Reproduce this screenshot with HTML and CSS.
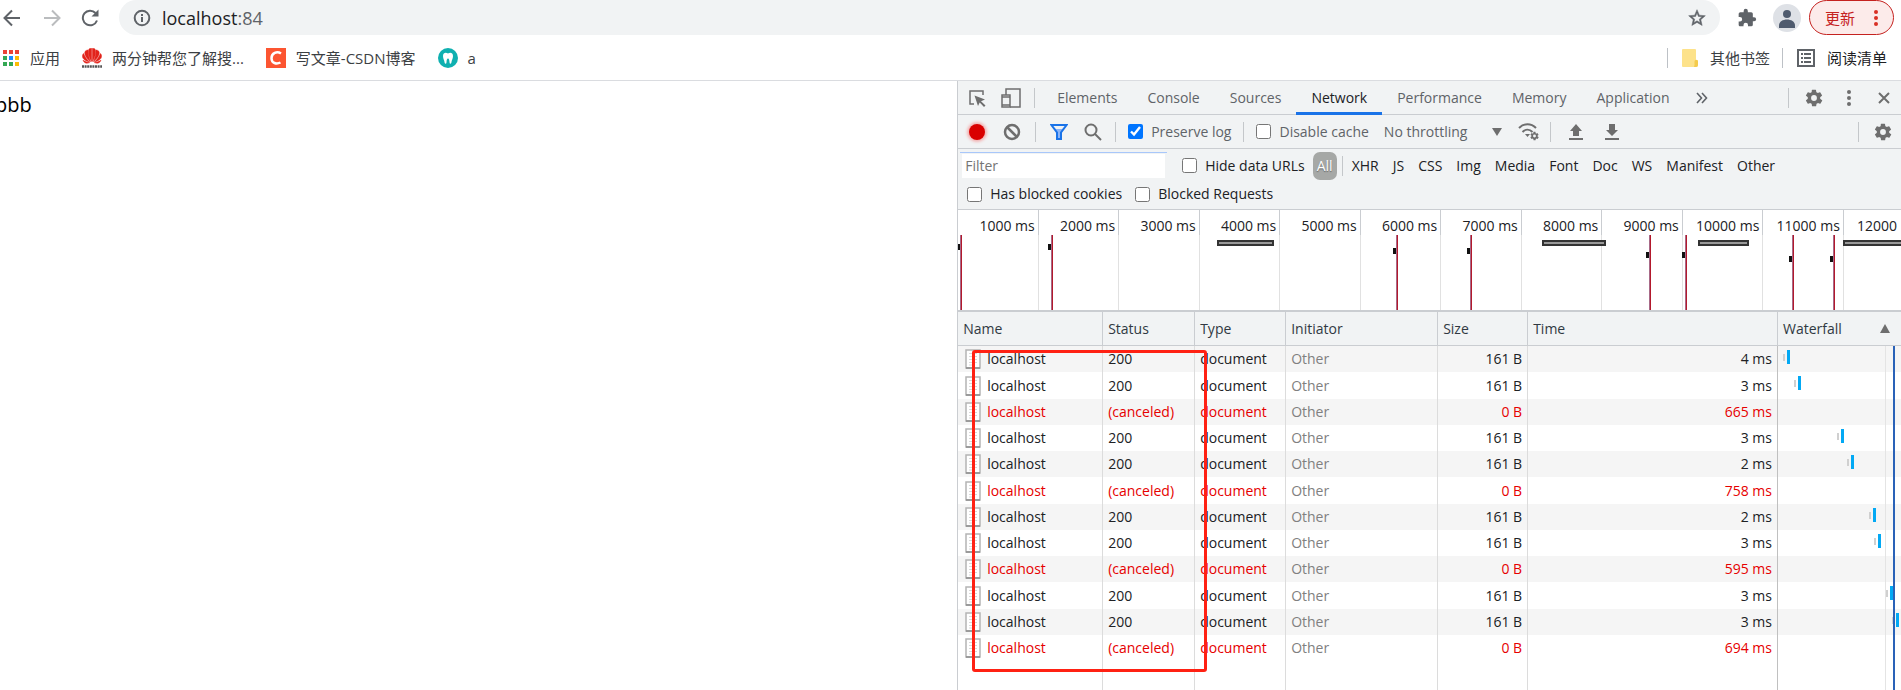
FILE: index.html
```html
<!DOCTYPE html>
<html lang="zh-CN">
<head>
    <meta charset="UTF-8">
    <meta name="viewport" content="width=device-width, initial-scale=1.0">
    <title>localhost:84</title>
    <link rel="stylesheet" href="styles.css">
</head>
<body>
    <svg class="sprite" aria-hidden="true">
        <symbol id="gear" viewBox="0 0 24 24">
            <path fill-rule="evenodd" d="M19.4 13a7.500 7.500 0 0 0 0-2l2.100-1.600a.5.5 0 0 0 .1-.7l-2-3.400a.5.5 0 0 0-.6-.2l-2.500 1a7.300 7.300 0 0 0-1.700-1l-.4-2.600a.5.5 0 0 0-.5-.5h-4a.5.5 0 0 0-.5.5L9.200 5.100a7.300 7.300 0 0 0-1.700 1l-2.500-1a.5.5 0 0 0-.6.2l-2 3.400a.5.5 0 0 0 .1.700L4.600 11a7.500 7.500 0 0 0 0 2l-2.100 1.600a.5.5 0 0 0-.1.700l2 3.400c.1.200.4.300.6.200l2.500-1a7.300 7.300 0 0 0 1.700 1l.4 2.600c0 .3.200.5.5.5h4c.3 0 .5-.2.500-.5l.4-2.600a7.300 7.300 0 0 0 1.700-1l2.500 1c.2.100.5 0 .6-.2l2-3.400a.5.5 0 0 0-.1-.7zM12 15.500a3.500 3.500 0 1 1 0-7 3.500 3.500 0 0 1 0 7z"/>
        </symbol>
        <symbol id="dots" viewBox="0 0 6 18">
            <circle cx="3" cy="3" r="2"/><circle cx="3" cy="9" r="2"/><circle cx="3" cy="15" r="2"/>
        </symbol>
        <symbol id="doc" viewBox="0 0 16 20">
            <rect x="1" y="1" width="14" height="18" fill="#fff" stroke="#b4b4b4" stroke-width="1.500"/>
            <path d="M1 19h14" stroke="#8c8c8c" stroke-width="1.500"/>
            <path d="M4 4.500h8M4 7.500h8M4 10.500h8M4 13.500h8M4 16h6" stroke="#d8d8d8"/>
        </symbol>
    </svg>

    <header class="browser">
        <div class="nav-row">
            <button class="icon-button" title="Back">
                <svg width="18" height="18" viewBox="0 0 18 18" fill="none" stroke="#5f6368" stroke-width="2"><path d="M17 9H2M9 1.500L1.500 9 9 16.500"/></svg>
            </button>
            <button class="icon-button" title="Forward">
                <svg width="18" height="18" viewBox="0 0 18 18" fill="none" stroke="#babcbe" stroke-width="2"><path d="M1 9h15M9 1.500L16.500 9 9 16.500"/></svg>
            </button>
            <button class="icon-button" title="Reload">
                <svg width="18" height="18" viewBox="0 0 18 18"><path d="M16 11.500A7.300 7.300 0 1 1 14.500 4" fill="none" stroke="#5f6368" stroke-width="2"/><path d="M17.500.5v7h-7z" fill="#5f6368"/></svg>
            </button>
            <div class="address">
                <svg width="18" height="18" viewBox="0 0 18 18"><circle cx="9" cy="9" r="7.300" fill="none" stroke="#5f6368" stroke-width="2"/><path d="M8 8h2v5H8zM8 5h2v2H8z" fill="#5f6368"/></svg>
                <span class="url">localhost<span class="port">:84</span></span>
                <button class="icon-button" title="Bookmark">
                    <svg width="20" height="20" viewBox="0 0 24 24"><path fill="#5f6368" stroke="#5f6368" stroke-width=".6" d="M22 9.240l-7.190-.62L12 2 9.190 8.630 2 9.240l5.460 4.730L5.820 21 12 17.270 18.180 21l-1.630-7.030L22 9.240zM12 15.400l-3.760 2.270 1-4.280-3.320-2.880 4.380-.38L12 6.100l1.710 4.040 4.380.38-3.320 2.880 1 4.280L12 15.400z"/></svg>
                </button>
            </div>
            <button class="icon-button" title="Extensions">
                <svg width="20" height="20" viewBox="0 0 24 24"><path fill="#5f6368" d="M20.500 11H19V7a2 2 0 0 0-2-2h-4V3.500a2.500 2.500 0 0 0-5 0V5H4a2 2 0 0 0-2 2v3.800h1.500a2.700 2.700 0 0 1 0 5.400H2V20c0 1.100.9 2 2 2h3.800v-1.500a2.700 2.700 0 0 1 5.400 0V22H17a2 2 0 0 0 2-2v-4h1.500a2.500 2.500 0 0 0 0-5z"/></svg>
            </button>
            <button class="avatar" title="Profile">
                <svg width="28" height="28" viewBox="0 0 28 28" fill="#4f5b6e"><circle cx="14" cy="10" r="4"/><path d="M6 21.500c0-4 4-6 8-6s8 2 8 6V24H6z"/></svg>
            </button>
            <button class="update">更新
                <svg width="6" height="18" fill="#d93025"><use href="#dots"/></svg>
            </button>
        </div>
        <nav class="bookmarks">
            <a href="#">
                <svg width="18" height="18" viewBox="0 0 18 18"><path fill="#ea4335" d="M1 1h4v4H1zM7 1h4v4H7zM13 1h4v4h-4z"/><path fill="#34a853" d="M1 7h4v4H1zM1 13h4v4H1z"/><path fill="#1a8cff" d="M7 7h4v4H7z"/><path fill="#34a853" d="M7 13h4v4H7z"/><path fill="#fbbc04" d="M13 7h4v4h-4zM13 13h4v4h-4z"/></svg>
                应用
            </a>
            <a href="#">
                <svg width="20" height="20" viewBox="0 0 20 20">
                    <g fill="#e2231a" stroke="#e2231a" stroke-width=".5">
                        <path d="M9.600 13.500C6 8 6 3 7 1c1-.8 2.300-1 2.600-.6zM10.400 13.500C14 8 14 3 13 1c-1-.8-2.300-1-2.600-.6z"/>
                        <path d="M8.600 13.700C4 10 2 6 3 3.500 4 2 6 2 6 2c0 4 1 8 2.600 11.700zM11.400 13.700C16 10 18 6 17 3.500 16 2 14 2 14 2c0 4-1 8-2.600 11.700z"/>
                        <path d="M7.800 14C3 13 0 10.500.5 7.500c.3-1.500 1-2 1-2C3 9 5 12 7.800 14zM12.200 14c4.800-1 7.800-3.500 7.300-6.500-.3-1.500-1-2-1-2C17 9 15 12 12.200 14z"/>
                        <path d="M7.500 14.600c-3 1.200-5.300.6-6.500-2.400 2 1.300 4 2 6.500 2.400zM12.500 14.600c3 1.200 5.300.6 6.500-2.400-2 1.300-4 2-6.500 2.400z"/>
                    </g>
                    <path d="M0 18.500h20" stroke="#555" stroke-width="2.500" stroke-dasharray="2 .6"/>
                </svg>
                两分钟帮您了解搜...
            </a>
            <a href="#">
                <svg width="20" height="20" viewBox="0 0 20 20"><rect width="20" height="20" fill="#fc5531"/><path d="M15 5.500C11 2.800 5.500 5 5.500 10.200c0 5 5 6.300 9 4.300" fill="none" stroke="#fff" stroke-width="2.500"/></svg>
                写文章-CSDN博客
            </a>
            <a href="#">
                <svg width="20" height="20" viewBox="0 0 20 20"><circle cx="10" cy="10" r="10" fill="#0fb0b0"/><path fill="#fff" d="M10 5.500C8 4 5 4.500 5 8c0 3 1.200 3.500 1.500 6 .2 2.200 1.800 2.300 2 .2.200-2.500.5-3.700 1.500-3.700s1.300 1.200 1.500 3.700c.2 2.100 1.800 2 2-.2.300-2.500 1.500-3 1.500-6 0-3.500-3-4-5-2.500z"/></svg>
                a
            </a>
            <div class="bookmarks-end">
                <a href="#">
                    <svg width="16" height="18" viewBox="0 0 16 18"><path d="M0 1a1 1 0 0 1 1-1h12a1 1 0 0 1 1 1v10h1a1 1 0 0 1 1 1v4a2 2 0 0 1-2 2H1a1 1 0 0 1-1-1z" fill="#fde28a"/><path d="M12.500 16v-3.500a1.700 1.700 0 0 1 3.500 0V16a2 2 0 0 1-2 2h-2" fill="#f4cb4c"/></svg>
                    其他书签
                </a>
                <a href="#" class="reading">
                    <svg width="18" height="18" viewBox="0 0 18 18"><rect x="1" y="1" width="16" height="16" fill="none" stroke="#5f6368" stroke-width="2"/><path d="M4 4h2v2H4zM7 4h7v2H7zM4 8h2v2H4zM7 8h7v2H7zM4 12h2v2H4zM7 12h7v2H7z" fill="#5f6368"/></svg>
                    阅读清单
                </a>
            </div>
        </nav>
    </header>

    <main class="content">
        <section class="page"><p>bbb</p></section>

        <section class="devtools">
            <div class="bar tabs">
                <button class="icon-button inspect" title="Inspect">
                    <svg width="18" height="18" viewBox="0 0 18 18"><path d="M6 15H2V2h13v4" fill="none" stroke="#6e6e6e" stroke-width="1.500"/><path d="M6.500 6.500l10.500 4-4 1.800 4.500 4.200-1.500 1.500-4.300-4.400L10 17z" fill="#6e6e6e"/></svg>
                </button>
                <button class="icon-button device" title="Device toolbar">
                    <svg width="20" height="20" viewBox="0 0 20 20" fill="none" stroke="#6e6e6e" stroke-width="1.500"><path d="M5 7V1h14v18H9"/><rect x="1" y="7" width="8" height="12"/><path d="M1 9h8M1 17h8"/></svg>
                </button>
                <span class="divider"></span>
                <button class="tab">Elements</button>
                <button class="tab">Console</button>
                <button class="tab">Sources</button>
                <button class="tab active">Network</button>
                <button class="tab">Performance</button>
                <button class="tab">Memory</button>
                <button class="tab">Application</button>
                <button class="icon-button more" title="More tabs">
                    <svg width="12" height="12" viewBox="0 0 12 12" fill="none" stroke="#5f6368" stroke-width="1.600"><path d="M1 1l4.500 5L1 11M6 1l4.500 5L6 11"/></svg>
                </button>
                <div class="bar-end">
                    <span class="divider"></span>
                    <button class="icon-button" title="Settings"><svg width="20" height="20" fill="#6e6e6e"><use href="#gear"/></svg></button>
                    <button class="icon-button menu" title="Customize"><svg width="6" height="18" fill="#6e6e6e"><use href="#dots"/></svg></button>
                    <button class="icon-button" title="Close"><svg width="12" height="12" viewBox="0 0 12 12" stroke="#6e6e6e" stroke-width="2"><path d="M1 1l10 10M11 1L1 11"/></svg></button>
                </div>
            </div>

            <div class="bar tools">
                <button class="icon-button record" title="Record"><span></span></button>
                <button class="icon-button" title="Clear">
                    <svg width="18" height="18" viewBox="0 0 18 18" fill="none" stroke="#6e6e6e" stroke-width="2.500"><circle cx="9" cy="9" r="7"/><path d="M4 4l10 10"/></svg>
                </button>
                <span class="divider"></span>
                <button class="icon-button" title="Filter">
                    <svg width="18" height="16" viewBox="0 0 18 16"><path d="M1.500 1h15L11 8.500V15H7V8.500z" fill="#8ab4f8"/><path d="M1.500 1h15L11 8.500V15H7V8.500z" fill="none" stroke="#1a73e8" stroke-width="2"/><path d="M3.500 2h11l-2.500 3H6z" fill="#f1f3f4"/></svg>
                </button>
                <button class="icon-button search" title="Search">
                    <svg width="18" height="18" viewBox="0 0 18 18" fill="none" stroke="#6e6e6e" stroke-width="2"><circle cx="7" cy="7" r="5.500"/><path d="M11 11l6 6"/></svg>
                </button>
                <span class="divider"></span>
                <label class="check"><input type="checkbox" checked>Preserve log</label>
                <span class="divider"></span>
                <label class="check"><input type="checkbox">Disable cache</label>
                <div class="throttling">
                    <select aria-label="Throttling">
                        <option>No throttling</option>
                    </select>
                    <svg width="10" height="8" viewBox="0 0 10 8"><path d="M0 0h10L5 8z" fill="#6e6e6e"/></svg>
                </div>
                <button class="icon-button conditions" title="Network conditions">
                    <svg width="22" height="18" viewBox="0 0 22 18"><g fill="none" stroke="#6e6e6e" stroke-width="2"><path d="M1 5c5-5 12-5 17 0M4.500 9c3-3 7-3 10 0"/></g><path d="M7 11h5l-2.500 3z" fill="#6e6e6e"/><svg x="11" y="8" width="11" height="10" fill="#6e6e6e"><use href="#gear"/></svg></svg>
                </button>
                <span class="divider"></span>
                <button class="icon-button transfer" title="Import">
                    <svg width="14" height="16" viewBox="0 0 14 16" fill="#6e6e6e"><path d="M7 0l6 7h-3v5H4V7H1zM0 14h14v2H0z"/></svg>
                </button>
                <button class="icon-button transfer" title="Export">
                    <svg width="14" height="16" viewBox="0 0 14 16" fill="#6e6e6e"><path d="M7 12l6-6h-3V0H4v6H1zM0 14h14v2H0z"/></svg>
                </button>
                <div class="bar-end">
                    <span class="divider"></span>
                    <button class="icon-button" title="Network settings"><svg width="20" height="20" fill="#6e6e6e"><use href="#gear"/></svg></button>
                </div>
            </div>

            <div class="filters">
                <div class="filter-row">
                    <div class="filter-box"><input type="text" placeholder="Filter" aria-label="Filter"></div>
                    <label class="check"><input type="checkbox">Hide data URLs</label>
                    <div class="types">
                        <button class="all">All</button>
                        <span class="divider"></span>
                        <button>XHR</button>
                        <button>JS</button>
                        <button>CSS</button>
                        <button>Img</button>
                        <button>Media</button>
                        <button>Font</button>
                        <button>Doc</button>
                        <button>WS</button>
                        <button>Manifest</button>
                        <button>Other</button>
                    </div>
                </div>
                <div class="filter-row second">
                    <label class="check"><input type="checkbox">Has blocked cookies</label>
                    <label class="check"><input type="checkbox">Blocked Requests</label>
                </div>
            </div>

            <div class="timeline" id="timeline"></div>

            <div class="requests">
                <table>
                    <colgroup>
                        <col class="col-name"><col class="col-status"><col class="col-type"><col class="col-initiator"><col class="col-size"><col><col class="col-waterfall">
                    </colgroup>
                    <thead>
                        <tr><th>Name</th><th>Status</th><th>Type</th><th>Initiator</th><th>Size</th><th>Time</th><th><div class="sorted">Waterfall <svg width="10" height="9" viewBox="0 0 10 9"><path d="M5 0l5 9H0z" fill="#6e6e6e"/></svg></div></th></tr>
                    </thead>
                    <tbody id="rows"></tbody>
                </table>
                <div class="highlight"></div>
            </div>
        </section>
    </main>

    <script src="script.js"></script>
</body>
</html>
```
FILE: styles.css
```css
* {
    box-sizing: border-box;
}

body {
    display: flex;
    flex-direction: column;
    height: 100vh;
    margin: 0;
    overflow: hidden;
    font-family: "Open Sans", "Noto Sans CJK SC", sans-serif;
    font-size: 14px;
    line-height: 20px;
    color: #202124;
    background-color: #fff;
}

button,
input,
select {
    font: inherit;
    color: inherit;
}

button {
    padding: 0;
    background: none;
    border: 0;
    white-space: nowrap;
}

svg {
    display: block;
    flex-shrink: 0;
}

.sprite {
    position: absolute;
    width: 0;
    height: 0;
}

.icon-button {
    display: flex;
    align-items: center;
    justify-content: center;
    flex-shrink: 0;
}

/* Browser chrome */
.browser {
    flex-shrink: 0;
    border-bottom: 1px solid #dadce0;
}

.nav-row {
    display: flex;
    align-items: center;
    gap: 22px;
    height: 35px;
    padding: 0 7px 0 3px;
}

.nav-row > .icon-button + .icon-button {
    margin-right: -2px;
}

.address {
    display: flex;
    flex: 1;
    align-items: center;
    gap: 11px;
    height: 35px;
    padding: 0 13px 0 14px;
    margin-right: -5px;
    background-color: #f1f3f4;
    border-radius: 18px;
}

.url {
    flex: 1;
    font-size: 18px;
}

.port {
    color: #5f6368;
}

.avatar {
    margin: 0 -14px 0 -6px;
    background-color: #dee1e6;
    border-radius: 50%;
}

.update {
    display: flex;
    align-items: center;
    gap: 18px;
    height: 35px;
    padding: 0 14px 0 15px;
    font-size: 15px;
    color: #c5221f;
    background-color: #fcebea;
    border: 1px solid #c5221f;
    border-radius: 18px;
}

.bookmarks {
    display: flex;
    align-items: center;
    gap: 22px;
    height: 45px;
    padding: 0 14px 0 2px;
    font-size: 15px;
}

.bookmarks a {
    display: flex;
    align-items: center;
    gap: 10px;
    color: #3c4043;
    text-decoration: none;
    white-space: nowrap;
}

.bookmarks-end {
    display: flex;
    gap: 12px;
    margin-left: auto;
}

.bookmarks-end a {
    gap: 12px;
    padding-left: 14px;
    border-left: 1px solid #bdc1c6;
}

.bookmarks .reading {
    color: #202124;
}

/* Page on the left, devtools on the right */
.content {
    display: flex;
    flex: 1;
    min-height: 0;
}

.page {
    flex: 1;
    overflow: hidden;
    font-size: 20px;
    color: #000;
}

.page p {
    margin: 14px 0 0 -5px;
}

.devtools {
    display: flex;
    flex-direction: column;
    width: 49.65%;
    background-color: #f1f3f4;
    border-left: 1px solid #cacdd1;
}

.bar {
    display: flex;
    align-items: center;
    flex-shrink: 0;
    height: 34px;
    padding: 0 8px 0 10px;
    color: #5f6368;
    border-bottom: 1px solid #cacdd1;
}

.divider {
    flex-shrink: 0;
    width: 1px;
    height: 20px;
    background-color: #c4c7ca;
}

.bar-end {
    display: flex;
    align-items: center;
    gap: 14px;
    margin-left: auto;
}

.device {
    margin: 0 13px 0 15px;
}

.tab {
    height: 34px;
    padding: 0 15px;
    border-bottom: 3px solid transparent;
    border-top: 3px solid transparent;
}

.divider + .tab {
    margin-left: 7px;
}

.tab.active {
    color: #202124;
    border-bottom-color: #1a73e8;
}

.more {
    margin-left: 11px;
}

.tabs .bar-end {
    gap: 15px;
    padding-right: 3px;
}

.menu {
    margin: 0 11px 0 7px;
}

.tools {
    gap: 14px;
}

.record span {
    width: 16px;
    height: 16px;
    background-color: #d90000;
    border-radius: 50%;
    box-shadow: 0 0 3px 2px #f3b0b0;
}

.record {
    width: 18px;
    margin-right: 3px;
}

.search {
    margin: 0 -1px 0 2px;
}

.check {
    display: flex;
    align-items: center;
    gap: 8px;
    white-space: nowrap;
}

.tools .check {
    margin: 0 -2px;
}

.check input {
    width: 15px;
    height: 15px;
    margin: 0;
}

.throttling {
    position: relative;
    width: 120px;
    margin-left: 3px;
}

.throttling select {
    width: 100%;
    padding: 0;
    appearance: none;
    background: none;
    border: 0;
}

.throttling svg {
    position: absolute;
    top: 6px;
    right: 2px;
    pointer-events: none;
}

.conditions {
    margin-right: -4px;
}

.transfer {
    margin: 0 4px;
}

.filters {
    flex-shrink: 0;
    height: 61px;
    border-bottom: 1px solid #cacdd1;
}

.filter-row {
    display: flex;
    align-items: center;
    height: 33px;
    padding-left: 2px;
}

.filter-row.second {
    gap: 13px;
    height: 24px;
    padding-left: 9px;
}

.filter-box {
    width: 207px;
    height: 28px;
    padding: 1px 2px;
    margin-right: 15px;
    border-top: 1px solid #a8c7fa;
}

.filter-box input {
    width: 100%;
    height: 24px;
    padding: 0 3px;
    background-color: #fff;
    border: 0;
    outline: none;
}

.filter-box input::placeholder {
    color: #757575;
}

.types {
    display: flex;
    align-items: center;
    gap: 14px;
    margin-left: 8px;
}

.types .all {
    width: 24px;
    height: 28px;
    margin-right: -9px;
    color: #fff;
    background-color: #a6a8a6;
    border-radius: 7px;
    text-shadow: 0 1px 1px #666;
}

.types .divider {
    margin-right: -5px;
}

/* Overview */
.timeline {
    position: relative;
    display: flex;
    flex-shrink: 0;
    height: 102px;
    overflow: hidden;
    background-color: #fff;
    border-bottom: 2px solid #cacdd1;
}

.tick {
    flex: 0 0 8.54%;
    border-right: 1px solid #e1e1e1;
}

.tick span {
    display: block;
    height: 25px;
    padding: 6px 3px 0 0;
    margin-right: -1px;
    text-align: right;
    white-space: nowrap;
    border-right: 1px solid #cacdd1;
}

.load-line,
.request-mark,
.request-span {
    position: absolute;
}

.load-line {
    top: 25px;
    bottom: 0;
    width: 2px;
    background-color: #b3192c;
    border-left: 1px solid #a86a88;
}

.request-mark {
    width: 3px;
    height: 6px;
    background-color: #111;
}

.request-span {
    top: 30px;
    height: 6px;
    background-color: #999;
    border: 2px solid #333;
}

/* Request list */
.requests {
    position: relative;
    flex: 1;
    min-height: 0;
    background-color: #fff;
}

table {
    width: 100%;
    height: 100%;
    table-layout: fixed;
    border-collapse: separate;
    border-spacing: 0;
}

.col-name { width: 145px; }
.col-status { width: 92px; }
.col-type { width: 91px; }
.col-initiator { width: 152px; }
.col-size { width: 90px; }
.col-waterfall { width: 123px; }

th,
td {
    padding: 0 5px;
    font-weight: 400;
    text-align: left;
    border-right: 1px solid #dcdcdc;
    white-space: nowrap;
    overflow: hidden;
}

th {
    height: 34px;
    color: #303942;
    background-color: #f1f3f4;
    border-right-color: #cacdd1;
    border-bottom: 1px solid #cacdd1;
}

th:last-child,
td:last-child {
    border-right: 0;
}

td:nth-child(6) {
    border-right-color: #c0c0c0;
}

.sorted {
    display: flex;
    align-items: center;
    justify-content: space-between;
    padding-right: 6px;
}

td {
    height: 26px;
}

tr:nth-child(4n + 2) td {
    height: 27px;
}

tr.filler td {
    height: auto;
}

tbody tr:nth-child(odd):not(.filler) {
    background-color: #f5f5f5;
}

.name {
    display: flex;
    align-items: center;
    gap: 6px;
    padding-left: 2px;
}

.initiator {
    color: #808080;
}

.number {
    text-align: right;
}

.canceled td:not(.initiator) {
    color: #e60000;
}

/* The guide and load lines run down the whole waterfall column */
.waterfall {
    position: relative;
    padding: 0;
    background: linear-gradient(#e4e4e4, #e4e4e4) 107px 0 / 1px 100% no-repeat;
}

.waterfall::after {
    position: absolute;
    top: 0;
    right: 6px;
    bottom: 0;
    width: 2px;
    content: "";
    background-color: #2a62b8;
}

.waterfall .bar-mark {
    position: absolute;
    top: 4px;
    width: 3px;
    height: 14px;
    background-color: #03a9f4;
}

.waterfall .bar-mark::before {
    position: absolute;
    top: 4px;
    left: -4px;
    width: 2px;
    height: 7px;
    content: "";
    background-color: #d0d0d0;
}

.highlight {
    position: absolute;
    top: 38px;
    left: 14px;
    width: 235px;
    height: 322px;
    border: 3px solid #ff2113;
    border-radius: 3px;
    pointer-events: none;
}
```
FILE: script.js
```js
// time, waterfall position in percent (null when the request was canceled)
const requests = [
    ['4 ms', 7],
    ['3 ms', 16],
    ['665 ms', null],
    ['3 ms', 51],
    ['2 ms', 59],
    ['758 ms', null],
    ['2 ms', 77],
    ['3 ms', 81],
    ['595 ms', null],
    ['3 ms', 91],
    ['3 ms', 96],
    ['694 ms', null]
];

// percent across the overview, row of the mark in it
const loads = [
    [0.2, 0], [9.8, 0], [46.4, 1], [54.3, 1],
    [73.3, 2], [77.1, 2], [88.4, 3], [92.8, 3]
];

const pending = [[27.5, 6], [61.9, 6.8], [78.5, 5.4], [93.9, 8]];

const timeline = document.getElementById('timeline');
let html = '';
for (let ms = 1000; ms <= 12000; ms += 1000) {
    html += `<div class="tick"><span>${ms} ms</span></div>`;
}
for (const [x, width] of pending) {
    html += `<i class="request-span" style="left: ${x}%; width: ${width}%"></i>`;
}
for (const [x, row] of loads) {
    html += `<i class="request-mark" style="left: calc(${x}% - 3px); top: ${34 + row * 4}px"></i>`;
    html += `<i class="load-line" style="left: ${x}%"></i>`;
}
timeline.innerHTML = html;

let rows = '';
for (const [time, x] of requests) {
    const canceled = x === null;
    rows += `<tr class="${canceled ? 'canceled' : ''}">
        <td><div class="name"><svg width="16" height="20"><use href="#doc"/></svg>localhost</div></td>
        <td>${canceled ? '(canceled)' : '200'}</td>
        <td>document</td>
        <td class="initiator">Other</td>
        <td class="number">${canceled ? '0 B' : '161 B'}</td>
        <td class="number">${time}</td>
        <td class="waterfall">${canceled ? '' : `<i class="bar-mark" style="left: ${x}%"></i>`}</td>
    </tr>`;
}
rows += '<tr class="filler"><td></td><td></td><td></td><td></td><td></td><td></td><td class="waterfall"></td></tr>';
document.getElementById('rows').innerHTML = rows;
```
